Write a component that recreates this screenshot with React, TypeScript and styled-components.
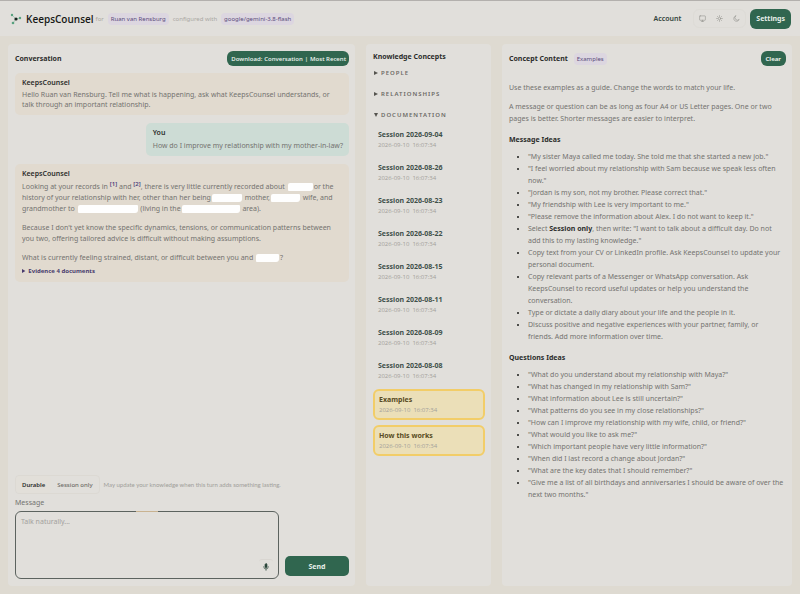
import React from 'react';
import styled, { createGlobalStyle } from 'styled-components';

const green = '#30664f';
const ink = '#2c2d2b';
const body = '#747370';

const GlobalStyle = createGlobalStyle`
  * { box-sizing: border-box; }
  body {
    margin: 0;
    background: #dedad1;
    color: ${ink};
    font-family: "Noto Sans", "Open Sans", sans-serif;
    font-size: 7px;
    line-height: 12px;
  }
  button, textarea { font-family: inherit; }
  p, h1, h2, h3, ul { margin: 0; }
`;

const Page = styled.div`
  display: flex;
  flex-direction: column;
  min-height: 100vh;
`;

const Header = styled.header`
  display: flex;
  align-items: center;
  justify-content: space-between;
  height: 36px;
  padding: 0 9px 0 10px;
  background: #e1dfdb;
  border-top: 1px solid #b3b0ad;
`;

const Brand = styled.div`
  display: flex;
  align-items: center;
  color: #aaa8a3;
  font-size: 6px;
`;

const Logo = styled.svg`
  width: 12px;
  height: 12px;
  margin-right: 4px;
`;

const BrandName = styled.h1`
  font-family: "Open Sans", "Noto Sans", sans-serif;
  font-size: 10px;
  font-weight: 600;
  color: #161816;
  margin-right: 2px;
`;

const Chip = styled.span<{ $spaced?: boolean }>`
  padding: 0 3px;
  margin: ${p => (p.$spaced ? '0 4px' : '0')};
  border-radius: 4px;
  background: #dcd6e0;
  color: #594a7c;
  font-size: 6px;
  line-height: 12px;
`;

const HeaderActions = styled.div`
  display: flex;
  align-items: center;
`;

const AccountLink = styled.a`
  color: #34443c;
  font-weight: 600;
  font-size: 7px;
  text-decoration: none;
  margin-right: 12px;
`;

const ThemeSwitch = styled.div`
  display: flex;
  border: 1px solid #dddbd6;
  border-radius: 6px;
  margin-right: 4px;
`;

const ThemeButton = styled.button`
  display: flex;
  align-items: center;
  justify-content: center;
  width: 17px;
  height: 17px;
  padding: 0;
  border: 0;
  background: none;
  color: #92928d;
  svg { width: 7px; height: 7px; }
`;

const GreenButton = styled.button<{ $size: 'small' | 'medium' | 'wide' }>`
  border: 0;
  background: ${green};
  color: #e8efe9;
  font-weight: 700;
  white-space: nowrap;
  font-size: ${p => (p.$size === 'small' ? 6 : 7)}px;
  height: ${p => (p.$size === 'small' ? 15 : 20)}px;
  width: ${p => (p.$size === 'wide' ? '64px' : 'auto')};
  padding: 0 ${p => (p.$size === 'medium' ? 6 : 5)}px;
  border-radius: ${p => (p.$size === 'wide' ? 5 : 6)}px;
`;

const Columns = styled.main`
  flex: 1;
  display: grid;
  grid-template-columns: 347fr 125fr 290fr;
  gap: 11px;
  padding: 8px;
`;

const Panel = styled.section`
  display: flex;
  flex-direction: column;
  min-width: 0;
  padding: 7px 6px 7px 7px;
  border-radius: 4px;
  background: #e1dfdb;
`;

const PanelHead = styled.div`
  display: flex;
  align-items: center;
  justify-content: space-between;
  height: 15px;
`;

const TitleGroup = styled.div`
  display: flex;
  align-items: center;
  gap: 6px;
`;

const PanelTitle = styled.h2`
  font-size: 7px;
  line-height: 12px;
  font-weight: 700;
`;

const DownloadBar = styled.div`
  display: flex;
  align-items: center;
  height: 15px;
  padding: 0 3px 0 4px;
  border-radius: 6px;
  background: ${green};
  color: #eef4ef;
  font-family: "Open Sans", "Noto Sans", sans-serif;
  font-size: 6px;
  font-weight: 600;
  gap: 2px;
`;

const DownloadLink = styled.a`
  color: inherit;
  text-decoration: none;
`;

const Thread = styled.div`
  flex: 1;
  display: flex;
  flex-direction: column;
  align-items: stretch;
  gap: 8px;
  padding-top: 7px;
`;

const Message = styled.article<{ $own?: boolean }>`
  align-self: ${p => (p.$own ? 'flex-end' : 'stretch')};
  padding: 4px 6px 5px 7px;
  border-radius: 5px;
  background: ${p => (p.$own ? '#cddcd5' : '#e1dacf')};
`;

const Author = styled.h3`
  font-size: 7px;
  line-height: 12px;
  font-weight: 600;
`;

const Speech = styled.p<{ $tight?: boolean }>`
  color: ${body};
  line-height: ${p => (p.$tight ? 10 : 11)}px;
  margin: 1px 0 8px;
  & + & { margin-top: 0; }
  &:last-child { margin-bottom: 0; }
`;

const Cite = styled.sup`
  color: #4a3c7a;
  font-size: 6px;
  font-weight: 600;
  line-height: 0;
`;

const Redacted = styled.span<{ $w: number }>`
  display: inline-block;
  width: ${p => p.$w}px;
  height: 8px;
  margin: 0 1px;
  border-radius: 2px 1px 3px 1px;
  background: #fefefe;
  vertical-align: -2px;
`;

const Evidence = styled.details`
  margin-top: -6px;
  color: #483a6d;
  font-size: 6px;
  font-weight: 700;
`;

const Composer = styled.form`
  display: flex;
  flex-direction: column;
`;

const ModeRow = styled.div`
  display: flex;
  align-items: center;
  gap: 4px;
  color: #a09e9a;
  font-size: 6px;
`;

const ModeHint = styled.span`
  font-family: Lato, "Open Sans", sans-serif;
`;

const ModeGroup = styled.div`
  display: flex;
  border: 1px solid #dcd9d3;
  border-radius: 4px;
`;

const ModeButton = styled.button<{ $active?: boolean }>`
  height: 17px;
  padding: 0 6px;
  border: 0;
  border-radius: 4px;
  background: ${p => (p.$active ? '#e2dfd9' : 'none')};
  color: ${p => (p.$active ? ink : '#6d6c68')};
  font-size: 6px;
  font-weight: ${p => (p.$active ? 600 : 500)};
`;

const MessageLabel = styled.label`
  color: ${body};
  line-height: 14px;
  margin: 2px 0 1px;
`;

const InputRow = styled.div`
  display: flex;
  align-items: flex-end;
  gap: 6px;
`;

const InputWrap = styled.div`
  position: relative;
  flex: 1;
  display: flex;
`;

const TopAccent = styled.span`
  position: absolute;
  top: 0;
  left: 46%;
  width: 22px;
  height: 1px;
  background: #c9b391;
`;

const MessageInput = styled.textarea`
  flex: 1;
  height: 68px;
  padding: 4px 5px;
  border: 1px solid #5c635f;
  border-radius: 6px;
  background: transparent;
  color: ${ink};
  font-size: 7px;
  line-height: 12px;
  resize: none;
  outline: none;
  &::placeholder { color: #a3a19d; opacity: 1; }
`;

const MicButton = styled.button`
  position: absolute;
  right: 6px;
  bottom: 6px;
  display: flex;
  align-items: center;
  justify-content: center;
  width: 14px;
  height: 14px;
  padding: 0;
  border: 0;
  border-top: 1px solid #d9d6d1;
  border-radius: 3px;
  background: none;
  color: #29453a;
  svg { width: 8px; height: 8px; }
`;

const SendSlot = styled.div`
  padding-bottom: 3px;
`;

const Group = styled.details`
  color: #6c6a66;
  line-height: 12px;
  margin-top: 9px;
  &:first-of-type { margin-top: 4px; }
`;

const GroupName = styled.summary`
  display: flex;
  align-items: center;
  gap: 3px;
  padding-left: 1px;
  font-size: 6px;
  font-weight: 600;
  letter-spacing: 1px;
  list-style: none;
  svg { width: 4px; height: 4px; fill: #55544f; }
  details[open] > & svg { transform: rotate(90deg); }
`;

const ConceptList = styled.div`
  display: flex;
  flex-direction: column;
  gap: 5px;
  padding-top: 4px;
`;

const Concept = styled.button<{ $marked?: boolean }>`
  display: flex;
  flex-direction: column;
  align-items: flex-start;
  width: 100%;
  height: ${p => (p.$marked ? 31 : 28)}px;
  padding: ${p => (p.$marked ? '3px 4px' : '4px 5px')};
  border: ${p => (p.$marked ? '2px solid #f2cd68' : '0')};
  border-radius: 6px;
  background: ${p => (p.$marked ? '#ebdfb8' : 'none')};
  text-align: left;
`;

const ConceptName = styled.span<{ $marked?: boolean }>`
  color: ${p => (p.$marked ? '#584b23' : '#40504a')};
  font-size: 7px;
  line-height: 11px;
  font-weight: 700;
`;

const ConceptDate = styled.time`
  color: #a3a09a;
  font-family: "Open Sans", "Noto Sans", sans-serif;
  font-size: 6px;
  line-height: 10px;
`;

const Article = styled.article`
  color: ${body};
  padding: 16px 2px 0 0;
`;

const Paragraph = styled.p`
  margin-bottom: 7px;
`;

const Heading = styled.h3`
  margin: 9px 0 5px;
  color: ${ink};
  font-size: 7px;
  line-height: 12px;
  font-weight: 700;
`;

const Bullets = styled.ul`
  padding-left: 19px;
  li::marker { color: #1d1e1d; }
  strong { color: ${ink}; font-weight: 700; }
`;

const sessions = ['09-04', '08-26', '08-23', '08-22', '08-15', '08-11', '08-09', '08-08'];

const questions = [
  'What do you understand about my relationship with Maya?',
  'What has changed in my relationship with Sam?',
  'What information about Lee is still uncertain?',
  'What patterns do you see in my close relationships?',
  'How can I improve my relationship with my wife, child, or friend?',
  'What would you like to ask me?',
  'Which important people have very little information?',
  'When did I last record a change about Jordan?',
  'What are the key dates that I should remember?',
  'Give me a list of all birthdays and anniversaries I should be aware of over the next two months.',
];

const stroke = { fill: 'none', stroke: 'currentColor', strokeWidth: 2, strokeLinecap: 'round' as const, strokeLinejoin: 'round' as const };

function GroupLabel({ text }: { text: string }) {
  return (
    <GroupName>
      <svg viewBox="0 0 4 4" aria-hidden="true"><path d="M0 0 4 2 0 4Z" /></svg>
      {text}
    </GroupName>
  );
}

function ConceptItem({ name, marked }: { name: string; marked?: boolean }) {
  return (
    <Concept type="button" $marked={marked}>
      <ConceptName $marked={marked}>{name}</ConceptName>
      <ConceptDate>2026-09-10&nbsp; 16:07:34</ConceptDate>
    </Concept>
  );
}

export default function App() {
  return (
    <Page>
      <GlobalStyle />
      <Header>
        <Brand>
          <Logo viewBox="0 0 12 12" aria-hidden="true">
            <path d="M2 2 6 6 10 5M6 6 3 10" fill="none" stroke="#9cc3af" strokeWidth="0.8" />
            <circle cx="2" cy="2" r="1.2" fill="#57a17e" />
            <circle cx="10" cy="5" r="1.2" fill="#57a17e" />
            <circle cx="3" cy="10" r="1.3" fill="#57a17e" />
            <circle cx="6" cy="6" r="1.6" fill="#17251f" />
          </Logo>
          <BrandName>KeepsCounsel</BrandName>
          for
          <Chip $spaced>Ruan van Rensburg</Chip>
          configured with
          <Chip $spaced>google/gemini-3.8-flash</Chip>
        </Brand>
        <HeaderActions>
          <AccountLink href="#account">Account</AccountLink>
          <ThemeSwitch>
            <ThemeButton type="button" aria-label="System theme">
              <svg viewBox="0 0 24 24" {...stroke}><rect x="2" y="3" width="20" height="15" rx="2" /><path d="M8 22h8M12 18v4" /></svg>
            </ThemeButton>
            <ThemeButton type="button" aria-label="Light theme">
              <svg viewBox="0 0 24 24" {...stroke}><circle cx="12" cy="12" r="4" /><path d="M12 2v3M12 19v3M2 12h3M19 12h3M5 5l2 2M17 17l2 2M5 19l2-2M17 7l2-2" /></svg>
            </ThemeButton>
            <ThemeButton type="button" aria-label="Dark theme">
              <svg viewBox="0 0 24 24" {...stroke}><path d="M9 3a8 8 0 0 0 12 12A9.500 9.500 0 1 1 9 3Z" /></svg>
            </ThemeButton>
          </ThemeSwitch>
          <GreenButton type="button" $size="medium">Settings</GreenButton>
        </HeaderActions>
      </Header>

      <Columns>
        <Panel>
          <PanelHead>
            <PanelTitle>Conversation</PanelTitle>
            <DownloadBar>
              <span>Download:</span>
              <DownloadLink href="#conversation">Conversation</DownloadLink>
              <span>|</span>
              <DownloadLink href="#recent">Most Recent</DownloadLink>
            </DownloadBar>
          </PanelHead>
          <Thread>
            <Message>
              <Author>KeepsCounsel</Author>
              <Speech $tight>
                Hello Ruan van Rensburg. Tell me what is happening, ask what KeepsCounsel understands, or talk through an important relationship.
              </Speech>
            </Message>
            <Message $own>
              <Author>You</Author>
              <Speech>How do I improve my relationship with my mother-in-law?</Speech>
            </Message>
            <Message>
              <Author>KeepsCounsel</Author>
              <Speech>
                Looking at your records in <Cite>[1]</Cite> and <Cite>[2]</Cite>, there is very little currently recorded about <Redacted $w={25} />or the
                {' '}history of your relationship with her, other than her being<Redacted $w={30} /> mother,<Redacted $w={29} /> wife, and
                {' '}grandmother to <Redacted $w={60} /> (living in the<Redacted $w={58} /> area).
              </Speech>
              <Speech>
                Because I don't yet know the specific dynamics, tensions, or communication patterns between you two, offering tailored advice is difficult without making assumptions.
              </Speech>
              <Speech>
                What is currently feeling strained, distant, or difficult between you and <Redacted $w={23} />?
              </Speech>
              <Evidence>
                <summary>Evidence 4 documents</summary>
              </Evidence>
            </Message>
          </Thread>
          <Composer>
            <ModeRow>
              <ModeGroup>
                <ModeButton type="button" $active>Durable</ModeButton>
                <ModeButton type="button">Session only</ModeButton>
              </ModeGroup>
              <ModeHint>May update your knowledge when this turn adds something lasting.</ModeHint>
            </ModeRow>
            <MessageLabel htmlFor="message">Message</MessageLabel>
            <InputRow>
              <InputWrap>
                <MessageInput id="message" placeholder="Talk naturally..." />
                <TopAccent />
                <MicButton type="button" aria-label="Dictate">
                  <svg viewBox="0 0 24 24" {...stroke}><rect x="9" y="2" width="6" height="12" rx="3" fill="currentColor" /><path d="M5 11a7 7 0 0 0 14 0M12 18v4" /></svg>
                </MicButton>
              </InputWrap>
              <SendSlot>
                <GreenButton type="button" $size="wide">Send</GreenButton>
              </SendSlot>
            </InputRow>
          </Composer>
        </Panel>

        <Panel>
          <PanelTitle>Knowledge Concepts</PanelTitle>
          <Group><GroupLabel text="PEOPLE" /></Group>
          <Group><GroupLabel text="RELATIONSHIPS" /></Group>
          <Group open>
            <GroupLabel text="DOCUMENTATION" />
            <ConceptList>
              {sessions.map(day => <ConceptItem key={day} name={`Session 2026-${day}`} />)}
              <ConceptItem name="Examples" marked />
              <ConceptItem name="How this works" marked />
            </ConceptList>
          </Group>
        </Panel>

        <Panel>
          <PanelHead>
            <TitleGroup>
              <PanelTitle>Concept Content</PanelTitle>
              <Chip>Examples</Chip>
            </TitleGroup>
            <GreenButton type="button" $size="small">Clear</GreenButton>
          </PanelHead>
          <Article>
            <Paragraph>Use these examples as a guide. Change the words to match your life.</Paragraph>
            <Paragraph>
              A message or question can be as long as four A4 or US Letter pages. One or two pages is better. Shorter messages are easier to interpret.
            </Paragraph>
            <Heading>Message Ideas</Heading>
            <Bullets>
              <li>"My sister Maya called me today. She told me that she started a new job."</li>
              <li>"I feel worried about my relationship with Sam because we speak less often now."</li>
              <li>"Jordan is my son, not my brother. Please correct that."</li>
              <li>"My friendship with Lee is very important to me."</li>
              <li>"Please remove the information about Alex. I do not want to keep it."</li>
              <li>Select <strong>Session only</strong>, then write: "I want to talk about a difficult day. Do not add this to my lasting knowledge."</li>
              <li>Copy text from your CV or LinkedIn profile. Ask KeepsCounsel to update your personal document.</li>
              <li>Copy relevant parts of a Messenger or WhatsApp conversation. Ask KeepsCounsel to record useful updates or help you understand the conversation.</li>
              <li>Type or dictate a daily diary about your life and the people in it.</li>
              <li>Discuss positive and negative experiences with your partner, family, or friends. Add more information over time.</li>
            </Bullets>
            <Heading>Questions Ideas</Heading>
            <Bullets>
              {questions.map(q => <li key={q}>"{q}"</li>)}
            </Bullets>
          </Article>
        </Panel>
      </Columns>
    </Page>
  );
}
